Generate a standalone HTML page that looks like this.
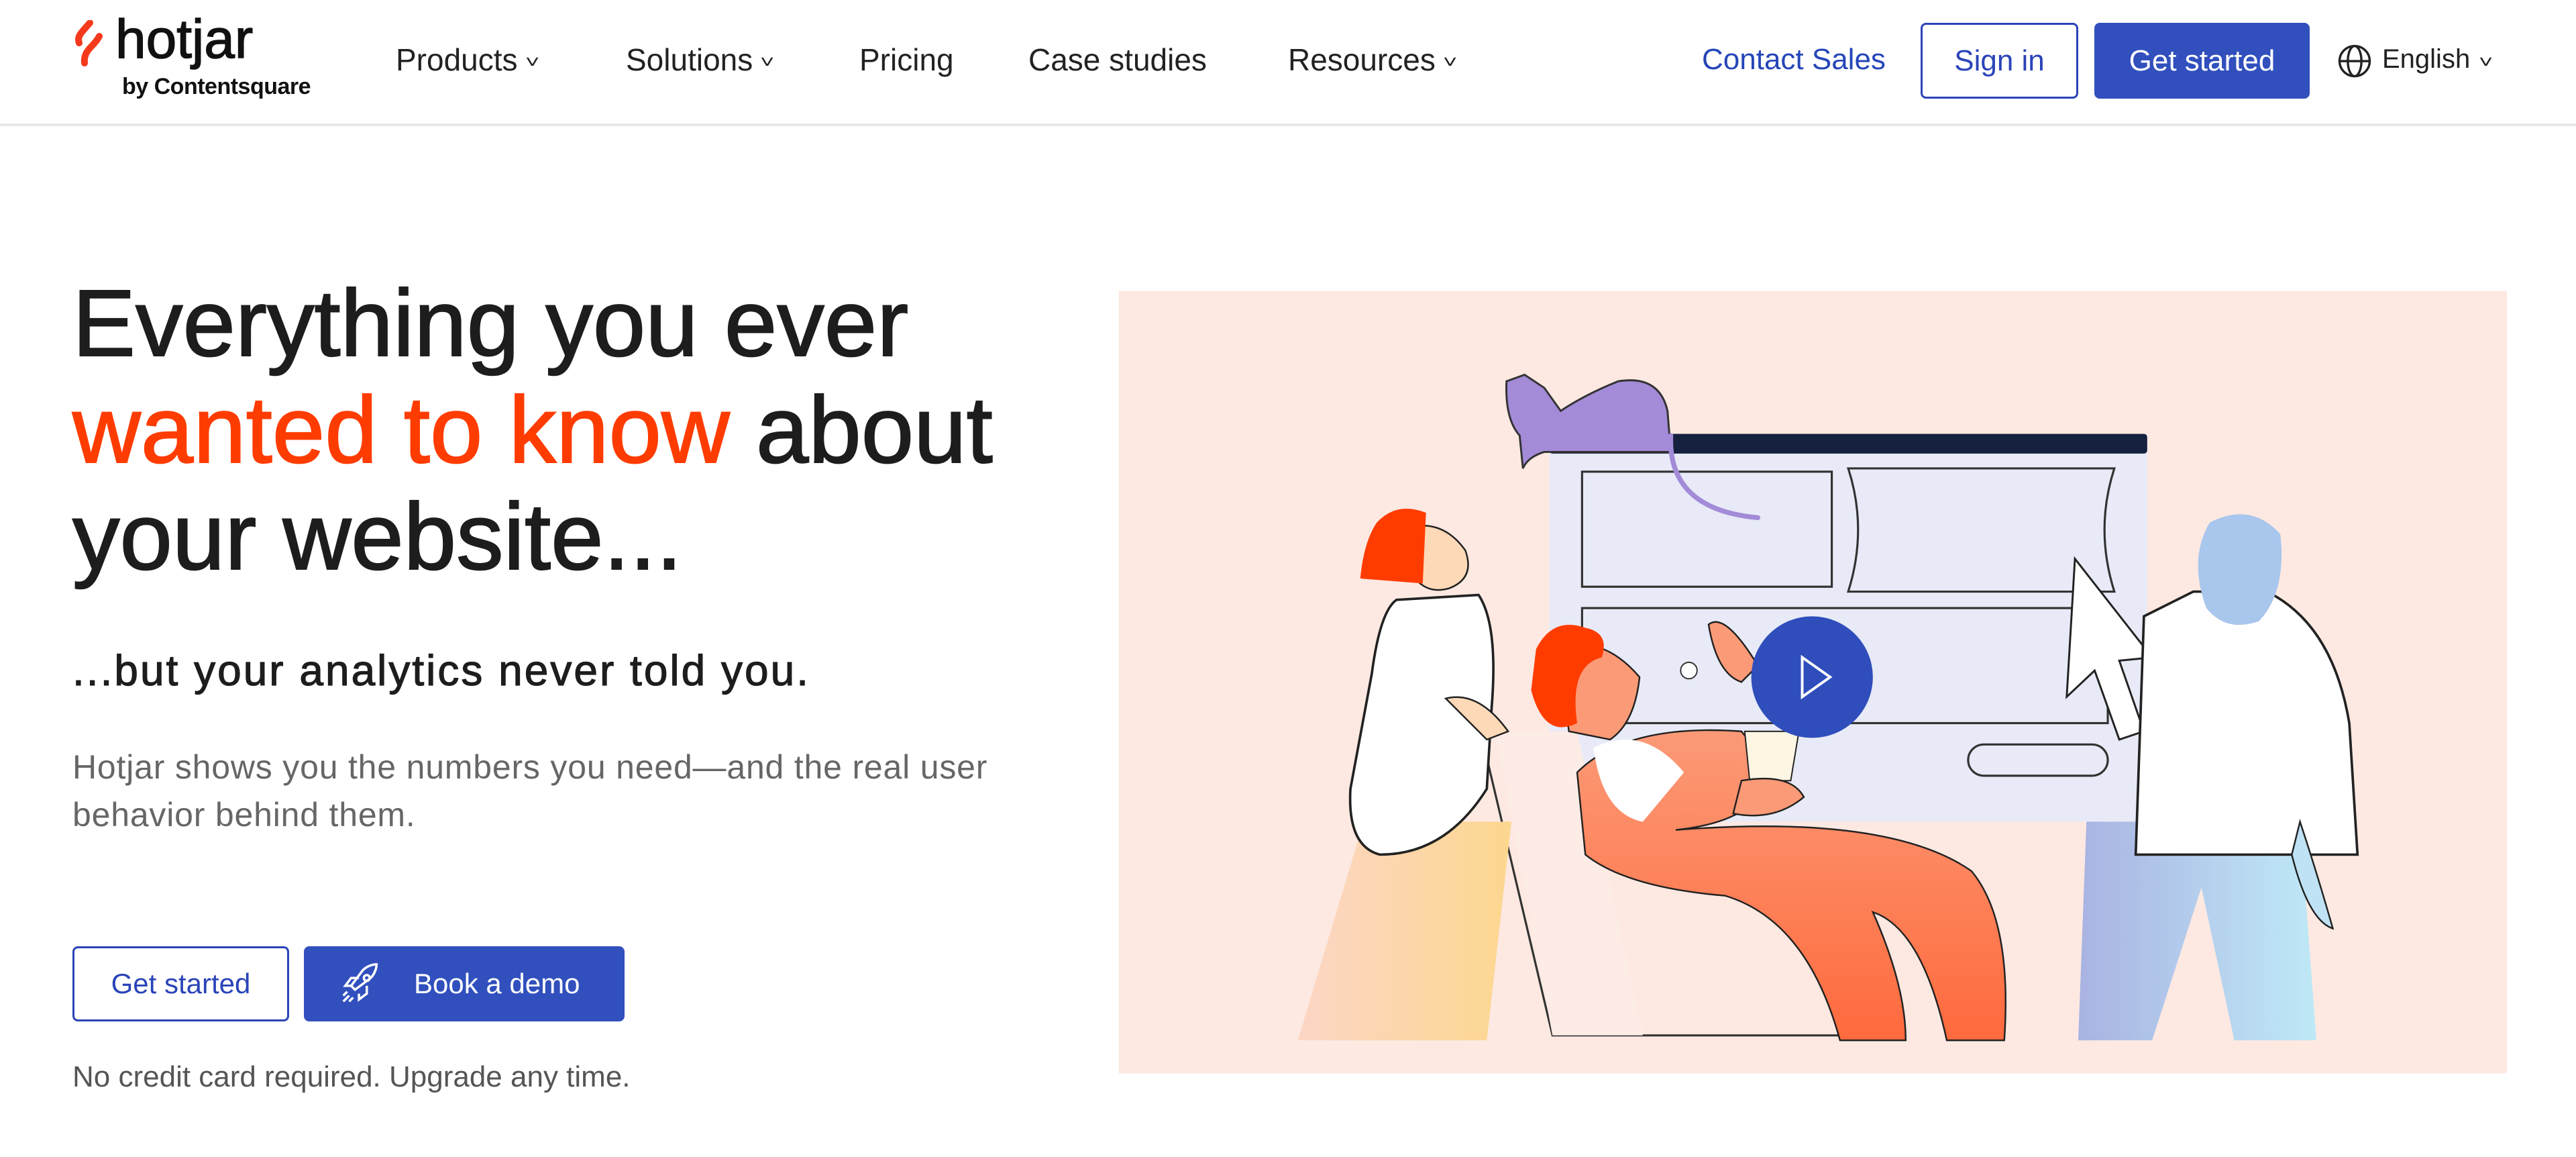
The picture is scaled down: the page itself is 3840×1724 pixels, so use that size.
<!DOCTYPE html>
<html><head><meta charset="utf-8">
<style>
*{margin:0;padding:0;box-sizing:border-box}
body{width:3840px;height:1724px;background:#fff;position:relative;overflow:hidden;font-family:"Liberation Sans",sans-serif;color:#1d1d1d}
.a{position:absolute;white-space:nowrap}
.nav{font-size:46px;color:#222;top:62px}
.chev{font-size:26px;margin-left:14px;vertical-align:middle;display:inline-block;transform:scaleX(1.4)}
.btn{position:absolute;display:flex;align-items:center;justify-content:center;border-radius:8px;font-size:44px}
h1{position:absolute;left:108px;top:402px;font-size:141px;font-weight:400;line-height:159px;letter-spacing:0;-webkit-text-stroke:2px #1d1d1d;color:#1d1d1d}
h1 span{color:#ff3c00;-webkit-text-stroke:2px #ff3c00}
</style></head><body>
<div style="position:absolute;left:0;top:184px;width:3840px;height:4px;background:#e8e8e8"></div>
<svg class="a" style="left:104px;top:30px" width="60" height="70" viewBox="0 0 60 70"><path d="M30 4 C18 18 10 24 14 34 M44 24 C36 40 20 44 22 64" stroke="#f5391c" stroke-width="10" fill="none" stroke-linecap="round"/></svg>
<div class="a" style="left:172px;top:12px;font-size:82px;font-weight:400;-webkit-text-stroke:1.5px #111;letter-spacing:0;color:#111">hotjar</div>
<div class="a" style="left:182px;top:110px;font-size:34px;font-weight:700;color:#111;letter-spacing:-0.5px">by Contentsquare</div>
<div class="a nav" style="left:590px">Products<span class="chev">˅</span></div>
<div class="a nav" style="left:933px">Solutions<span class="chev">˅</span></div>
<div class="a nav" style="left:1281px">Pricing</div>
<div class="a nav" style="left:1533px">Case studies</div>
<div class="a nav" style="left:1920px">Resources<span class="chev">˅</span></div>
<div class="a" style="left:2537px;top:64px;font-size:44px;color:#2546b8">Contact Sales</div>
<div class="btn" style="left:2863px;top:34px;width:235px;height:113px;border:3px solid #2a44b8;color:#2a44b8">Sign in</div>
<div class="btn" style="left:3122px;top:34px;width:321px;height:113px;background:#3150bd;color:#fff">Get started</div>
<svg class="a" style="left:3483px;top:64px" width="54" height="54" viewBox="0 0 24 24" fill="none" stroke="#222" stroke-width="1.5"><circle cx="12" cy="12" r="10"/><ellipse cx="12" cy="12" rx="4.5" ry="10"/><path d="M2 12h20"/></svg>
<div class="a" style="left:3551px;top:66px;font-size:40px;color:#222">English<span style="font-size:26px;margin-left:16px;display:inline-block;transform:scaleX(1.4)">˅</span></div>

<h1>Everything you ever<br><span>wanted to know</span> about<br>your website...</h1>
<div class="a" style="left:108px;top:962px;font-size:64px;-webkit-text-stroke:1.2px #1d1d1d;letter-spacing:3px">...but your analytics never told you.</div>
<div class="a" style="left:108px;top:1108px;font-size:50px;color:#666;line-height:71px;letter-spacing:0.8px">Hotjar shows you the numbers you need—and the real user<br>behavior behind them.</div>
<div class="btn" style="left:108px;top:1410px;width:323px;height:112px;border:3px solid #2a44b8;color:#2a44b8;font-size:42px">Get started</div>
<div class="btn" style="left:453px;top:1410px;width:478px;height:112px;background:#3150bd;color:#fff;font-size:42px;justify-content:flex-start;padding-left:50px">
<svg width="70" height="70" viewBox="0 0 24 24" fill="none" stroke="#fff" stroke-width="1.2" style="margin-right:44px"><path d="M9 15l-2-2 6-8c2-2 5-3 7-3 0 2-1 5-3 7l-8 6z"/><circle cx="15" cy="9" r="1.5"/><path d="M7 13l-3 0 3-4 4 0M11 17v3l4-3v-4M6 18l-3 3M8 19l-2 2M5 16l-2 2"/></svg>Book a demo</div>
<div class="a" style="left:108px;top:1580px;font-size:44px;color:#555">No credit card required. Upgrade any time.</div>

<svg class="a" style="left:0;top:0" width="3840" height="1724" viewBox="0 0 1568 704" preserveAspectRatio="none">
<defs>
<linearGradient id="gy" x1="0" x2="1"><stop offset="0" stop-color="#fcd6c5"/><stop offset="1" stop-color="#fdd78f"/></linearGradient>
<linearGradient id="go" x1="0" y1="0" x2="0" y2="1"><stop offset="0" stop-color="#fb9a77"/><stop offset="1" stop-color="#ff6a3d"/></linearGradient>
<linearGradient id="gb" x1="0" x2="1"><stop offset="0" stop-color="#a9b3e2"/><stop offset="1" stop-color="#bfe9f7"/></linearGradient>
</defs>
<rect x="681" y="177" width="845" height="476" fill="#fde9e2"/>
<rect x="943" y="264" width="364" height="236" fill="#e8ebf7"/>
<rect x="943" y="264" width="364" height="12" rx="2" fill="#16203f"/>
<g fill="none" stroke="#333" stroke-width="1.3">
<rect x="963" y="287" width="152" height="70"/>
<path d="M1125 285 H1287 Q1275 322 1287 360 H1125 Q1137 322 1125 285Z"/>
<rect x="963" y="370" width="320" height="70"/>
<rect x="1198" y="453" width="85" height="19" rx="9.5"/>
<path d="M900 440 L945 630 H1120"/>
</g>
<path d="M910 445 H960 L1000 630 H945 Z" fill="#fdebe6"/>
<path d="M917 232 L928 228 L940 236 L950 250 Q965 240 985 232 Q1010 228 1015 250 L1017 275 L940 275 Q930 278 927 285 L925 265 Q916 255 917 232Z" fill="#a38bd8" stroke="#333" stroke-width="1.2"/>
<path d="M1017 265 Q1015 310 1070 315" fill="none" stroke="#a38bd8" stroke-width="3" stroke-linecap="round"/>
<path d="M790 633 L830 500 L860 500 L880 633 Z M860 500 L920 500 L905 633 L880 633 Z" fill="url(#gy)"/>
<path d="M850 365 L900 362 Q912 380 908 430 L905 480 Q880 520 840 520 Q820 515 822 480 L835 410 Q840 372 850 365Z" fill="#fff" stroke="#222" stroke-width="1.5"/>
<path d="M862 320 Q880 318 892 335 Q898 352 882 358 Q868 362 860 350Z" fill="#fdd9b8" stroke="#222" stroke-width="1"/>
<path d="M838 318 Q850 305 868 312 L866 355 L828 352 Q830 330 838 318Z" fill="#ff3c00"/>
<path d="M880 425 Q900 420 918 445 L905 450 Z" fill="#fdd9b8" stroke="#222" stroke-width="1"/>
<path d="M960 470 Q990 440 1060 445 L1080 470 Q1070 500 1020 505 Q1150 495 1200 530 Q1225 560 1220 633 L1185 633 Q1170 565 1140 555 Q1160 600 1160 633 L1120 633 Q1100 560 1050 545 Q990 540 965 520Z" fill="url(#go)" stroke="#222" stroke-width="1"/>
<path d="M970 455 Q1000 440 1025 470 L1000 500 Q975 495 970 455Z" fill="#fff"/>
<path d="M948 395 Q975 385 998 412 Q995 440 980 450 L955 445Z" fill="#fb9a77" stroke="#222" stroke-width="1"/>
<path d="M935 395 Q945 375 965 382 Q980 385 975 400 Q955 405 960 440 Q940 450 932 420Z" fill="#ff3c00"/>
<path d="M1040 380 Q1050 372 1070 405 L1060 415 Q1045 410 1040 380Z" fill="#fb9a77" stroke="#222" stroke-width="1"/>
<path d="M1062 445 L1095 445 L1090 475 L1065 475Z" fill="#fdf6e3" stroke="#222" stroke-width="0.8"/>
<path d="M1060 475 Q1090 470 1098 485 Q1080 500 1055 495Z" fill="#fb9a77" stroke="#222" stroke-width="1"/>
<circle cx="1028" cy="408" r="5" fill="#fff" stroke="#333" stroke-width="0.8"/>
<circle cx="1103" cy="412" r="37" fill="#2f4ebc"/>
<path d="M1097 400 L1114 412 L1097 424Z" fill="none" stroke="#fff" stroke-width="1.6"/>
<path d="M1263 340 L1258 424 L1275 408 L1290 450 L1305 445 L1290 402 L1310 400Z" fill="#fff" stroke="#222" stroke-width="1.2"/>
<path d="M1270 500 L1400 500 L1410 633 L1360 633 L1340 540 L1310 633 L1265 633Z" fill="url(#gb)"/>
<path d="M1305 375 L1335 360 L1380 360 Q1420 380 1430 440 L1435 520 L1300 520 Z" fill="#fff" stroke="#222" stroke-width="1.5"/>
<path d="M1345 318 Q1370 305 1388 325 Q1392 360 1375 378 Q1355 385 1343 370 Q1332 340 1345 318Z" fill="#a9c6ec"/>
<path d="M1400 500 Q1410 530 1420 565 Q1405 560 1395 520Z" fill="#bfe3f5" stroke="#222" stroke-width="1"/>
</svg>
</body></html>
